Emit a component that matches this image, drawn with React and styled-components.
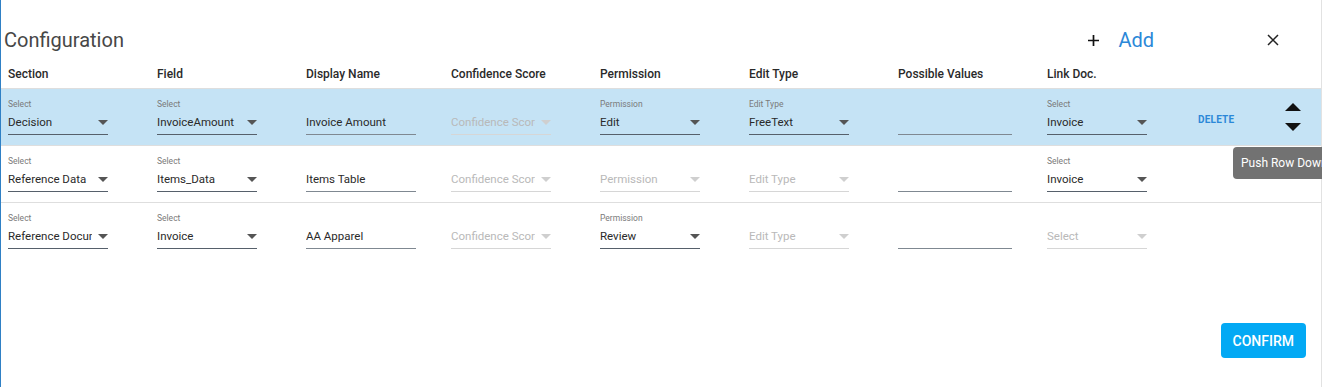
import React from "react";
import styled, { createGlobalStyle, css } from "styled-components";

const GlobalStyle = createGlobalStyle`
  html, body {
    margin: 0;
    padding: 0;
    background: #ffffff;
    overflow: hidden;
  }
  body {
    font-family: Roboto, "Liberation Sans", Arial, sans-serif;
    color: #2c2c2c;
  }
`;

const COLUMNS = "149px 149px 145px 149px 149px 149px 149px 151px 87px 16px 1fr";

const Dialog = styled.div`
  display: flex;
  flex-direction: column;
  height: 100vh;
  box-sizing: border-box;
  border-left: 1px solid #2f80c5;
  border-right: 1px solid #e2e2e2;
`;

const TitleBar = styled.div`
  display: flex;
  align-items: center;
  height: 60px;
  box-sizing: border-box;
  padding: 20px 42px 0 3px;
`;

const Title = styled.h2`
  flex: 1;
  margin: 0;
  font-size: 20px;
  font-weight: 400;
  color: #474747;
`;

const AddButton = styled.button`
  display: flex;
  align-items: center;
  gap: 19px;
  border: 0;
  background: none;
  padding: 0;
  font-family: inherit;
  font-size: 20px;
  color: #2b88d8;
  cursor: pointer;
`;

const CloseButton = styled.button`
  display: flex;
  border: 0;
  background: none;
  padding: 0;
  margin-left: 113px;
  cursor: pointer;
`;

const Grid = styled.div`
  display: grid;
  grid-template-columns: ${COLUMNS};
  align-items: center;
  padding-left: 7px;
  border-bottom: 1px solid #dedede;
`;

const HeaderRow = styled(Grid)`
  height: 28px;
  font-size: 12px;
  font-weight: 500;
  color: #2a2a2a;
`;

const Row = styled(Grid)`
  height: 57px;
  box-sizing: border-box;
  background: ${({ $active }) => ($active ? "#c5e3f5" : "transparent")};
  border-bottom-color: ${({ $last }) => ($last ? "transparent" : "#dedede")};
`;

const FieldBox = styled.div`
  display: flex;
  flex-direction: column;
  width: ${({ $width }) => $width || 100}px;
  padding-top: 10px;
  align-self: start;
`;

const FieldLabel = styled.span`
  height: 11px;
  font-size: 8.5px;
  line-height: 11px;
  color: #7a7a7a;
`;

const Control = styled.div`
  position: relative;
  height: 24px;
  line-height: 24px;
  font-size: 11.5px;
  border-bottom: 1px solid #56606b;
  color: #2a2a2a;
  ${({ $disabled }) =>
    $disabled &&
    css`
      color: #b9b9b9;
      border-bottom-color: #d6d6d6;
    `}
  ${({ $input }) =>
    $input &&
    css`
      line-height: 25px;
      border-bottom-color: #7f8891;
    `}
`;

const ValueText = styled.span`
  display: block;
  margin-right: ${({ $select }) => ($select ? "16px" : "0")};
  white-space: nowrap;
  overflow: hidden;
`;

const Caret = styled.span`
  position: absolute;
  right: 0;
  top: 10px;
  width: 0;
  height: 0;
  border-left: 5px solid transparent;
  border-right: 5px solid transparent;
  border-top: 5px solid ${({ $disabled }) => ($disabled ? "#cfcfcf" : "#555")};
`;

const DeleteLink = styled.span`
  font-size: 10px;
  font-weight: 700;
  color: #2b88d8;
  letter-spacing: 0.2px;
  cursor: pointer;
`;

const Mover = styled.div`
  position: relative;
  display: flex;
  flex-direction: column;
  gap: 12px;
`;

const Triangle = styled.span`
  width: 0;
  height: 0;
  border-left: 8px solid transparent;
  border-right: 8px solid transparent;
  ${({ $up }) =>
    $up ? "border-bottom: 8px solid #111;" : "border-top: 8px solid #111;"}
`;

const Tooltip = styled.div`
  position: absolute;
  top: calc(100% + 16px);
  left: -52px;
  z-index: 10;
  padding: 0 8px;
  height: 32px;
  line-height: 32px;
  border-radius: 4px;
  background: #727272;
  color: #ffffff;
  font-size: 12px;
  white-space: nowrap;
`;

const Footer = styled.div`
  display: flex;
  justify-content: flex-end;
  margin-top: auto;
  padding: 0 15px 29px 0;
`;

const ConfirmButton = styled.button`
  height: 35px;
  padding: 0 12px;
  border: 0;
  border-radius: 4px;
  background: #03a9f4;
  color: #ffffff;
  font-family: inherit;
  font-size: 14px;
  font-weight: 500;
  cursor: pointer;
`;

const PlusIcon = () => (
  <svg width="11" height="11" viewBox="0 0 11 11">
    <path d="M5.5 0v11M0 5.5h11" stroke="#111" strokeWidth="1.7" />
  </svg>
);

const CloseIcon = () => (
  <svg width="12" height="12" viewBox="0 0 12 12">
    <path d="M1 1l10 10M11 1L1 11" stroke="#222" strokeWidth="1.5" />
  </svg>
);

const HEADERS = [
  "Section",
  "Field",
  "Display Name",
  "Confidence Score",
  "Permission",
  "Edit Type",
  "Possible Values",
  "Link Doc.",
];

const Select = ({ label, value, placeholder }) => {
  const disabled = !value;
  return (
    <FieldBox>
      <FieldLabel>{disabled ? "" : label}</FieldLabel>
      <Control $disabled={disabled}>
        <ValueText $select>{value || placeholder}</ValueText>
        <Caret $disabled={disabled} />
      </Control>
    </FieldBox>
  );
};

const TextInput = ({ value, width }) => (
  <FieldBox $width={width}>
    <FieldLabel />
    <Control $input>
      <ValueText>{value}</ValueText>
    </Control>
  </FieldBox>
);

const ROWS = [
  {
    section: "Decision",
    field: "InvoiceAmount",
    display: "Invoice Amount",
    permission: "Edit",
    editType: "FreeText",
    link: "Invoice",
    active: true,
  },
  {
    section: "Reference Data",
    field: "Items_Data",
    display: "Items Table",
    link: "Invoice",
  },
  {
    section: "Reference Document",
    field: "Invoice",
    display: "AA Apparel",
    permission: "Review",
  },
];

const ConfigRow = ({ row, last }) => (
  <Row $active={row.active} $last={last}>
    <Select label="Select" value={row.section} />
    <Select label="Select" value={row.field} />
    <TextInput value={row.display} width={110} />
    <Select placeholder="Confidence Score" />
    <Select label="Permission" value={row.permission} placeholder="Permission" />
    <Select label="Edit Type" value={row.editType} placeholder="Edit Type" />
    <TextInput value="" width={114} />
    <Select label="Select" value={row.link} placeholder="Select" />
    <div>{row.active && <DeleteLink>DELETE</DeleteLink>}</div>
    {row.active ? (
      <Mover>
        <Triangle $up />
        <Triangle />
        <Tooltip>Push Row Down</Tooltip>
      </Mover>
    ) : (
      <div />
    )}
  </Row>
);

export default function App() {
  return (
    <>
      <GlobalStyle />
      <Dialog>
        <TitleBar>
          <Title>Configuration</Title>
          <AddButton>
            <PlusIcon />
            Add
          </AddButton>
          <CloseButton>
            <CloseIcon />
          </CloseButton>
        </TitleBar>
        <HeaderRow>
          {HEADERS.map((h) => (
            <span key={h}>{h}</span>
          ))}
        </HeaderRow>
        {ROWS.map((row, i) => (
          <ConfigRow key={i} row={row} last={i === ROWS.length - 1} />
        ))}
        <Footer>
          <ConfirmButton>CONFIRM</ConfirmButton>
        </Footer>
      </Dialog>
    </>
  );
}
